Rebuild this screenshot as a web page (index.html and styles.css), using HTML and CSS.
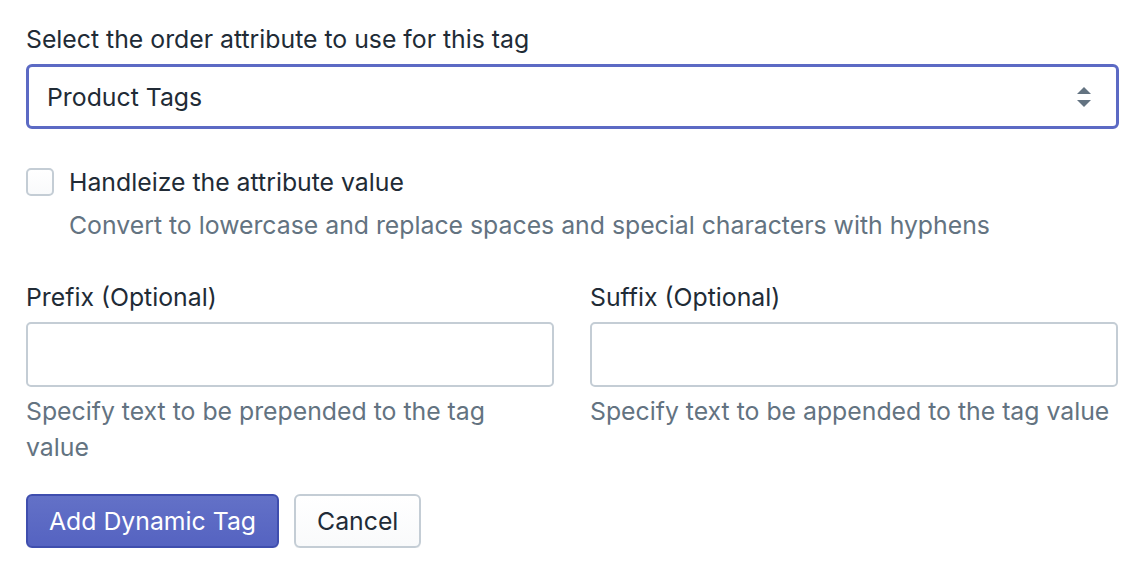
FILE: index.html
```html
<!DOCTYPE html>
<html lang="en">
<head>
    <meta charset="UTF-8">
    <meta name="viewport" content="width=device-width, initial-scale=1.0">
    <title>Add Dynamic Tag</title>
    <link rel="stylesheet" href="styles.css">
</head>
<body>
    <form class="tag-form">
        <div class="field">
            <label class="label" for="attribute">Select the order attribute to use for this tag</label>
            <div class="select">
                <span class="select-value">Product Tags</span>
                <svg class="select-arrows" width="14" height="20" viewBox="0 0 14 20">
                    <polygon points="7,0 14,7 0,7" fill="#637381"/>
                    <polygon points="0,13 14,13 7,20" fill="#637381"/>
                </svg>
            </div>
        </div>

        <div class="checkbox-field">
            <label class="checkbox-row">
                <span class="checkbox"></span>
                <span>Handleize the attribute value</span>
            </label>
            <p class="help checkbox-help">Convert to lowercase and replace spaces and special characters with hyphens</p>
        </div>

        <div class="field-group">
            <div class="field">
                <label class="label" for="prefix">Prefix (Optional)</label>
                <input class="input" id="prefix" type="text">
                <p class="help">Specify text to be prepended to the tag value</p>
            </div>
            <div class="field">
                <label class="label" for="suffix">Suffix (Optional)</label>
                <input class="input" id="suffix" type="text">
                <p class="help">Specify text to be appended to the tag value</p>
            </div>
        </div>

        <div class="actions">
            <button type="button" class="btn btn-primary">Add Dynamic Tag</button>
            <button type="button" class="btn">Cancel</button>
        </div>
    </form>
</body>
</html>
```

FILE: styles.css
```css
body {
    margin: 0;
    padding: 21px 20px 0 26px;
    background-color: #fff;
    font-family: Inter, "Open Sans", sans-serif;
    font-size: 24.8px;
    line-height: 36px;
    color: #212b36;
}

.tag-form {
    display: flex;
    flex-direction: column;
}

.field {
    display: flex;
    flex-direction: column;
}

.label {
    display: block;
    margin-bottom: 7px;
}

.select {
    display: flex;
    align-items: center;
    justify-content: space-between;
    height: 65px;
    box-sizing: border-box;
    margin-right: -1px;
    padding: 0 25px 0 18px;
    border: 3px solid #5c6ac4;
    border-radius: 6px;
}

.checkbox-field {
    margin-top: 35px;
}

.checkbox-row {
    display: flex;
    align-items: center;
    gap: 15px;
}

.checkbox {
    width: 28px;
    height: 28px;
    box-sizing: border-box;
    border: 2px solid #c4cdd5;
    border-radius: 5px;
    background: linear-gradient(#fff, #f9fafb);
}

.help {
    margin: 0;
    color: #637381;
}

.checkbox-help {
    margin: 7px 0 0 43px;
}

.field-group {
    display: grid;
    grid-template-columns: 1fr 1fr;
    gap: 36px;
    margin-top: 36px;
}

.input {
    height: 65px;
    box-sizing: border-box;
    margin: 0 0 6px;
    border: 2px solid #c4cdd5;
    border-radius: 5px;
    font: inherit;
}

.actions {
    display: flex;
    gap: 15px;
    margin-top: 29px;
}

.btn {
    height: 54px;
    padding: 0 21px;
    border: 2px solid #c4cdd5;
    border-radius: 6px;
    background: linear-gradient(#fff, #f9fafb);
    box-shadow: 0 1px 0 rgba(22, 29, 37, 0.05);
    font: inherit;
    color: #212b36;
    cursor: pointer;
}

.btn-primary {
    border-color: #3f4eae;
    background: linear-gradient(#6371c7, #5563c1);
    color: #fff;
}
```
